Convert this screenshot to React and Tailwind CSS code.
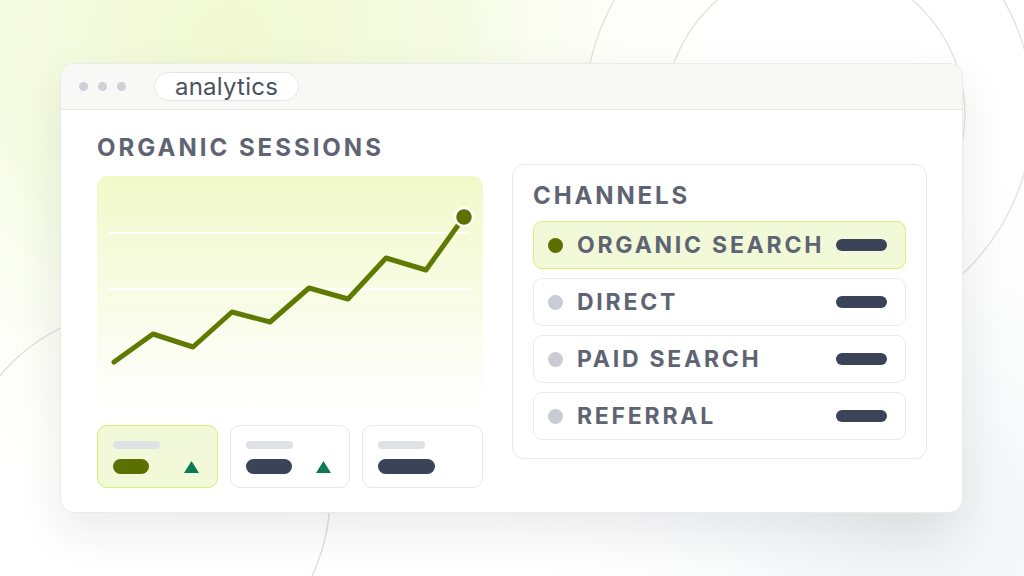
import React from "react";

const font = { fontFamily: "Inter, 'Noto Sans', 'Liberation Sans', sans-serif" };

function BgDecor() {
  return (
    <svg className="absolute inset-0" width="1024" height="576" viewBox="0 0 1024 576">
      <defs>
        <radialGradient id="lime" cx="230" cy="40" r="520" gradientUnits="userSpaceOnUse">
          <stop offset="0" stopColor="#f2f9d2" />
          <stop offset="0.45" stopColor="#f6fbe4" />
          <stop offset="1" stopColor="#ffffff" stopOpacity="0" />
        </radialGradient>
        <radialGradient id="gray" cx="900" cy="520" r="420" gradientUnits="userSpaceOnUse">
          <stop offset="0" stopColor="#eef0f2" />
          <stop offset="1" stopColor="#ffffff" stopOpacity="0" />
        </radialGradient>
      </defs>
      <rect width="1024" height="576" fill="#ffffff" />
      <rect width="1024" height="576" fill="url(#gray)" />
      <rect width="1024" height="576" fill="url(#lime)" />
      <circle cx="809" cy="111" r="224" fill="none" stroke="#e4e4e1" strokeWidth="1.5" />
      <circle cx="815" cy="114" r="150" fill="none" stroke="#e4e4e1" strokeWidth="1.5" />
      <circle cx="143" cy="496" r="187" fill="none" stroke="#e0e0dd" strokeWidth="1.5" />
    </svg>
  );
}

function Chart() {
  const pts = [
    [17, 186], [56, 158], [96, 171], [135, 136], [173, 146], [212, 112],
    [251, 123], [289, 82], [329, 94], [367, 41],
  ];
  return (
    <div className="relative h-[236px] w-[386px] rounded-[10px] bg-gradient-to-b from-[#f1f9c9] to-[#ffffff] mt-[14px]">
      <svg className="absolute inset-0" width="386" height="236" viewBox="0 0 386 236">
        <line x1="11" y1="57" x2="373" y2="57" stroke="#ffffff" strokeWidth="2" opacity="0.9" />
        <line x1="11" y1="113" x2="373" y2="113" stroke="#ffffff" strokeWidth="2" opacity="0.9" />
        <line x1="11" y1="169" x2="373" y2="169" stroke="#ffffff" strokeWidth="2" opacity="0.6" />
        <polyline
          points={pts.map((p) => p.join(",")).join(" ")}
          fill="none"
          stroke="#5f7a02"
          strokeWidth="5"
          strokeLinecap="round"
          strokeLinejoin="round"
        />
        <circle cx="367" cy="41" r="9" fill="#5c7000" stroke="#ffffff" strokeWidth="2.5" />
      </svg>
    </div>
  );
}

function Triangle() {
  return (
    <svg width="15" height="12" viewBox="0 0 15 12">
      <polygon points="7.5,0 15,12 0,12" fill="#0e7a55" />
    </svg>
  );
}

function StatCard({ active, barW, arrow }) {
  return (
    <div
      className={
        active
          ? "h-[63px] w-[121px] rounded-[10px] border border-[#d8ef76] bg-[#f2f9d9] p-[15px]"
          : "h-[63px] w-[121px] rounded-[10px] border border-[#e7e7e5] bg-white p-[15px]"
      }
    >
      <div className="h-[8px] w-[47px] rounded-full bg-[#dfe1e5]" />
      <div className="mt-[10px] flex items-center justify-between pr-[3px]">
        <div
          className={active ? "h-[15px] rounded-full bg-[#5c7000]" : "h-[15px] rounded-full bg-[#3b4359]"}
          style={{ width: barW }}
        />
        {arrow ? <Triangle /> : null}
      </div>
    </div>
  );
}

function ChannelRow({ label, active }) {
  return (
    <div
      className={
        active
          ? "flex h-[48px] items-center rounded-[9px] border border-[#d8ef76] bg-[#f2f9d9] pl-[14px] pr-[18px]"
          : "flex h-[48px] items-center rounded-[9px] border border-[#ebebe9] bg-white pl-[14px] pr-[18px]"
      }
    >
      <div className={active ? "h-[15px] w-[15px] rounded-full bg-[#5c7000]" : "h-[15px] w-[15px] rounded-full bg-[#c9ccd4]"} />
      <div className="ml-[14px] flex-1 text-[23px] font-bold leading-none tracking-[0.12em] text-[#5e6472]">
        {label}
      </div>
      <div className="h-[12px] w-[51px] rounded-full bg-[#3b4359]" />
    </div>
  );
}

export default function App() {
  return (
    <div className="relative h-[576px] w-[1024px] overflow-hidden" style={font}>
      <BgDecor />
      <div className="relative pl-[60px] pt-[63px]">
        <div className="h-[450px] w-[903px] overflow-hidden rounded-[14px] border border-[#ebebe9] bg-white shadow-[0_18px_45px_rgba(30,35,45,0.09)]">
          <div className="flex h-[46px] items-center border-b border-[#e8e8e6] bg-[#f8f8f7] pl-[18px]">
            <div className="flex gap-[10px]">
              <div className="h-[9px] w-[9px] rounded-full bg-[#cfd0d8]" />
              <div className="h-[9px] w-[9px] rounded-full bg-[#cfd0d8]" />
              <div className="h-[9px] w-[9px] rounded-full bg-[#cfd0d8]" />
            </div>
            <div className="ml-[28px] flex h-[29px] w-[145px] items-center justify-center rounded-full border border-[#e5e5e3] bg-white text-[24px] leading-none tracking-[0.01em] text-[#4b5161]">
              analytics
            </div>
          </div>
          <div className="flex pl-[36px] pt-[23px]">
            <div className="w-[386px]">
              <div className="h-[29px] whitespace-nowrap text-[24px] font-bold leading-[29px] tracking-[0.125em] text-[#5e6472]">
                ORGANIC SESSIONS
              </div>
              <Chart />
              <div className="mt-[13px] flex gap-[12px]">
                <StatCard active barW={36} arrow />
                <StatCard barW={46} arrow />
                <StatCard barW={57} />
              </div>
            </div>
            <div className="ml-[29px] mt-[31px] h-[295px] w-[415px] rounded-[12px] border border-[#e9e9e7] bg-white px-[20px] pt-[16px]">
              <div className="h-[29px] text-[24px] font-bold leading-[29px] tracking-[0.12em] text-[#5e6472]">
                CHANNELS
              </div>
              <div className="mt-[11px] flex flex-col gap-[9px]">
                <ChannelRow label="ORGANIC SEARCH" active />
                <ChannelRow label="DIRECT" />
                <ChannelRow label="PAID SEARCH" />
                <ChannelRow label="REFERRAL" />
              </div>
            </div>
          </div>
        </div>
      </div>
    </div>
  );
}
